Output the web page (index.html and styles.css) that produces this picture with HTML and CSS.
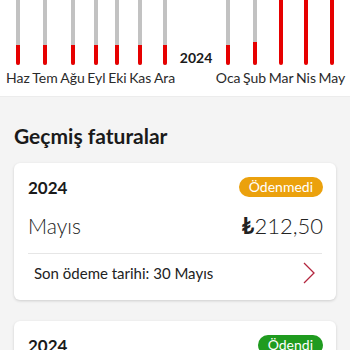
FILE: index.html
```html
<!DOCTYPE html>
<html lang="tr">
<head>
<meta charset="utf-8">
<link rel="stylesheet" href="styles.css">
</head>
<body>
<div class="chart">
  <div class="col"><div class="bar"><div class="fill" style="height:20px"></div></div><span class="lbl">Haz</span></div>
  <div class="col"><div class="bar"><div class="fill" style="height:20px"></div></div><span class="lbl">Tem</span></div>
  <div class="col"><div class="bar"><div class="fill" style="height:20px"></div></div><span class="lbl">Ağu</span></div>
  <div class="col"><div class="bar"><div class="fill" style="height:20px"></div></div><span class="lbl">Eyl</span></div>
  <div class="col"><div class="bar"><div class="fill" style="height:20px"></div></div><span class="lbl">Eki</span></div>
  <div class="col"><div class="bar"><div class="fill" style="height:20px"></div></div><span class="lbl">Kas</span></div>
  <div class="col"><div class="bar"><div class="fill" style="height:20px"></div></div><span class="lbl">Ara</span></div>
  <div class="col year"><span class="year-lbl">2024</span></div>
  <div class="col"><div class="bar"><div class="fill" style="height:20px"></div></div><span class="lbl">Oca</span></div>
  <div class="col"><div class="bar"><div class="fill" style="height:23px"></div></div><span class="lbl">Şub</span></div>
  <div class="col"><div class="bar"><div class="fill" style="height:65px"></div></div><span class="lbl">Mar</span></div>
  <div class="col"><div class="bar"><div class="fill" style="height:65px"></div></div><span class="lbl">Nis</span></div>
  <div class="col"><div class="bar"><div class="fill" style="height:65px"></div></div><span class="lbl">May</span></div>
</div>

<main class="content">
  <h2 class="title">Geçmiş faturalar</h2>

  <section class="card">
    <div class="card-head">
      <span class="year-text">2024</span>
      <span class="badge badge-unpaid">Ödenmedi</span>
    </div>
    <div class="amount-row">
      <span class="month">Mayıs</span>
      <span class="amount"><span class="cur">₺</span>212,50</span>
    </div>
    <div class="divider"></div>
    <div class="due-row">
      <span class="due">Son ödeme tarihi: 30 Mayıs</span>
      <svg class="chev" width="12" height="22" viewBox="0 0 12 22"><path d="M1 1 L11 11 L1 21" fill="none" stroke="#b3263e" stroke-width="1.3"/></svg>
    </div>
  </section>

  <section class="card">
    <div class="card-head">
      <span class="year-text">2024</span>
      <span class="badge badge-paid">Ödendi</span>
    </div>
    <div class="amount-row">
      <span class="month">Nisan</span>
      <span class="amount"><span class="cur">₺</span>198,40</span>
    </div>
  </section>
</main>
</body>
</html>
```

FILE: styles.css
```css
* { box-sizing: border-box; }
html, body { margin: 0; padding: 0; }
body {
  background: #f4f4f4;
  font-family: Lato, "Noto Sans", sans-serif;
  color: #222;
  width: 350px;
  height: 350px;
  overflow: hidden;
}
.chart {
  display: flex;
  gap: 2.5px;
  height: 97px;
  padding-left: 6px;
  background: #fff;
  border-bottom: 1px solid #ececec;
}
.col {
  display: flex;
  flex-direction: column;
  align-items: center;
}
.bar {
  width: 4px;
  height: 65px;
  background: #c2c2c2;
  border-radius: 0 0 2px 2px;
  display: flex;
  flex-direction: column;
  justify-content: flex-end;
  overflow: hidden;
}
.fill { background: #e60000; width: 100%; }
.lbl {
  margin-top: 5px;
  font-size: 14px;
  line-height: 16px;
  color: #2a2a2a;
}
.year { justify-content: flex-start; padding: 50px 1px 0 2px; }
.year-lbl {
  font-weight: 700;
  font-size: 14px;
  line-height: 16px;
  color: #1a1a1a;
}
.content { padding: 0 14px; }
.title {
  margin: 27px 0 15px;
  font-size: 21px;
  line-height: 24px;
  font-weight: 700;
  color: #1a1a1a;
}
.card {
  background: #fff;
  border-radius: 6px;
  box-shadow: 0 1px 3px rgba(0,0,0,0.16);
  padding: 14px 13px 8px 14px;
  margin-bottom: 21px;
}
.card-head {
  display: flex;
  justify-content: space-between;
  align-items: center;
  height: 20px;
}
.year-text { font-weight: 700; font-size: 17px; color: #1a1a1a; }
.badge {
  color: #fff;
  font-size: 14px;
  line-height: 20px;
  padding: 0 10px;
  border-radius: 10px;
}
.badge-unpaid { background: #eba10d; }
.badge-paid { background: #1f9b1f; }
.amount-row {
  display: flex;
  justify-content: space-between;
  align-items: center;
  margin-top: 15px;
  height: 26px;
}
.month { font-size: 21px; font-weight: 300; color: #222; }
.amount { font-size: 22px; font-weight: 300; color: #222; }
.cur { font-weight: 700; }
.divider { height: 1px; background: #e6e6e6; margin-top: 15px; margin-right: 1px; }
.due-row {
  display: flex;
  justify-content: space-between;
  align-items: center;
  height: 38px;
  padding: 0 8px 0 6px;
}
.due { font-size: 15px; color: #222; }
.chev { display: block; }
```
